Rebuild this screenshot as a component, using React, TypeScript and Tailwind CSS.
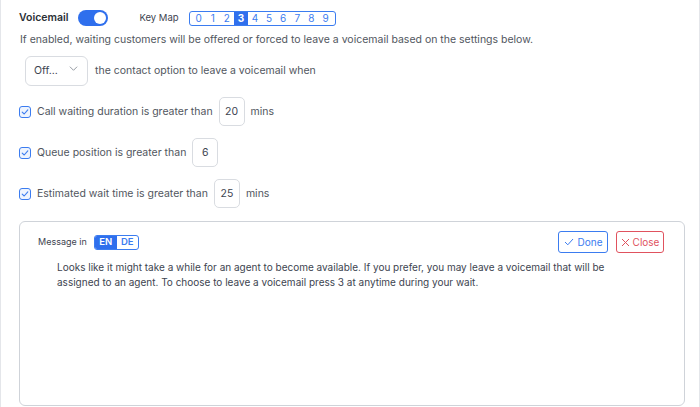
const keys = ["0", "1", "2", "3", "4", "5", "6", "7", "8", "9"];

const CheckBox = () => (
	<span className="flex h-[12px] w-[12px] shrink-0 items-center justify-center rounded-[3px] border border-[#3b7cf0] bg-[#eef4fe]">
		<svg width="8" height="8" viewBox="0 0 8 8" fill="none">
			<path d="M1.2 4.2 L3.2 6 L6.8 1.8" stroke="#3b7cf0" strokeWidth="1.1" strokeLinecap="round" strokeLinejoin="round" />
		</svg>
	</span>
);

const NumBox = ({ value }: { value: string }) => (
	<span className="flex h-[29px] w-[26px] items-center justify-center rounded-[5px] border border-[#d9dce1] text-[10.5px] text-[#3d4450]">
		{value}
	</span>
);

const Condition = ({ label, value, unit }: { label: string; value: string; unit?: string }) => (
	<div className="flex items-center gap-[6px]">
		<CheckBox />
		<span>{label}</span>
		<NumBox value={value} />
		{unit && <span>{unit}</span>}
	</div>
);

export default function App() {
	return (
		<div className="h-[407px] w-[700px] overflow-hidden border-x border-[#e4e6ea] bg-white font-['Inter',sans-serif] text-[10.5px] text-[#51565e]">
			<div className="flex items-center pl-[18px] pt-[10px]">
				<span className="text-[10.5px] font-semibold text-[#2a2f36]">Voicemail</span>
				<span className="ml-[10px] flex h-[16px] w-[30px] items-center justify-end rounded-full bg-[#2f6fed] pr-[2px]">
					<span className="h-[12px] w-[12px] rounded-full bg-white" />
				</span>
				<span className="ml-[31px] text-[9.5px] text-[#3d4450]">Key Map</span>
				<div className="ml-[10px] flex h-[15px] overflow-hidden rounded-[3px] border border-[#3b7cf0] px-[2px]">
					{keys.map((k) => (
						<span
							key={k}
							className={
								k === "3"
									? "flex w-[14.1px] items-center justify-center bg-[#2f6fed] text-[10px] font-bold text-white"
									: "flex w-[14.1px] items-center justify-center text-[10px] text-[#3b7cf0]"
							}
						>
							{k}
						</span>
					))}
				</div>
			</div>

			<p className="mt-[6px] pl-[19px] leading-[16px]">
				If enabled, waiting customers will be offered or forced to leave a voicemail based on the settings below.
			</p>

			<div className="mt-[8px] flex items-center pl-[24px]">
				<div className="flex h-[30px] w-[63px] items-center justify-between rounded-[6px] border border-[#d9dce1] pl-[8px] pr-[9px] text-[10.5px] text-[#3d4450]">
					<span>Off...</span>
					<svg width="9" height="9" viewBox="0 0 10 10" fill="none" className="-mt-[6px]">
						<path d="M1 3 L5 7 L9 3" stroke="#8a9099" strokeWidth="1" />
					</svg>
				</div>
				<span className="ml-[7px]">the contact option to leave a voicemail when</span>
			</div>

			<div className="mt-[11px] flex flex-col gap-[12px] pl-[18px]">
				<Condition label="Call waiting duration is greater than" value="20" unit="mins" />
				<Condition label="Queue position is greater than" value="6" />
				<Condition label="Estimated wait time is greater than" value="25" unit="mins" />
			</div>

			<div className="ml-[18px] mt-[13px] h-[185px] w-[666px] rounded-[6px] border border-[#cfd3d9] pl-[18px] pr-[20px] pt-[9px]">
				<div className="flex items-center justify-between">
					<div className="flex items-center gap-[7px]">
						<span className="text-[9px] text-[#3d4450]">Message in</span>
						<div className="flex h-[15px] overflow-hidden rounded-[3px] border border-[#3b7cf0] text-[9.5px] font-semibold">
							<span className="flex w-[22px] items-center justify-center bg-[#2f6fed] text-white">EN</span>
							<span className="flex w-[21px] items-center justify-center text-[#3b7cf0]">DE</span>
						</div>
					</div>
					<div className="flex items-center gap-[8px]">
						<button className="flex h-[22px] w-[50px] items-center justify-center gap-[4px] rounded-[3px] border border-[#3b7cf0] text-[10px] text-[#3b7cf0]">
							<svg width="10" height="8" viewBox="0 0 10 8" fill="none">
								<path d="M1 4 L3.8 6.8 L9 1" stroke="#3b7cf0" strokeWidth="1" />
							</svg>
							Done
						</button>
						<button className="flex h-[22px] w-[48px] items-center justify-center gap-[3px] rounded-[3px] border border-[#e0525e] text-[10px] text-[#e0525e]">
							<svg width="9" height="9" viewBox="0 0 9 9" fill="none">
								<path d="M1 1 L8 8 M8 1 L1 8" stroke="#e0525e" strokeWidth="1" />
							</svg>
							Close
						</button>
					</div>
				</div>
				<p className="mt-[7px] pl-[19px] text-[10px] leading-[15px] text-[#3d4450]">
					Looks like it might take a while for an agent to become available. If you prefer, you may leave a voicemail that will be
					<br />
					assigned to an agent. To choose to leave a voicemail press 3 at anytime during your wait.
				</p>
			</div>
		</div>
	);
}
